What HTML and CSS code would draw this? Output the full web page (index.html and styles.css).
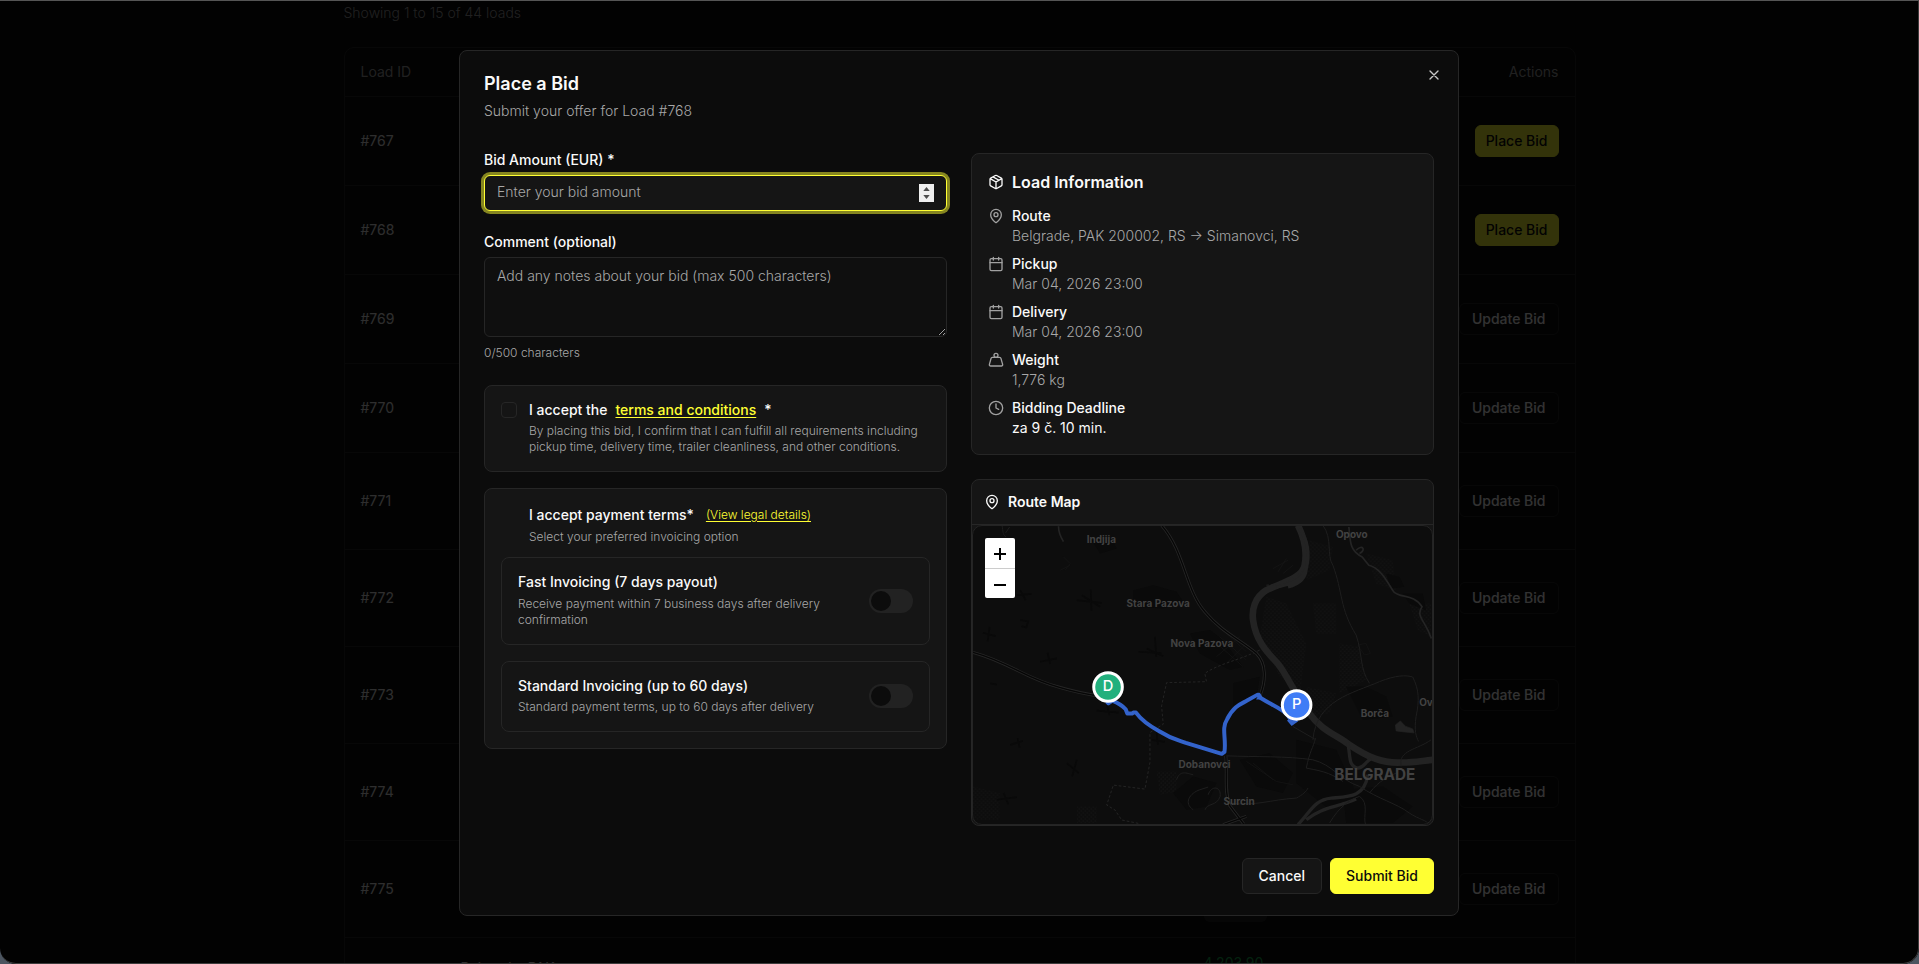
FILE: index.html
```html
<!DOCTYPE html>
<html lang="en">
<head>
<meta charset="utf-8">
<title>Place a Bid</title>
<link rel="stylesheet" href="styles.css">
</head>
<body>
<div class="window">
  <main class="page">
    <p class="summary">Showing 1 to 15 of 44 loads</p>
    <div class="table-card">
      <table class="loads">
        <colgroup><col class="col-id"><col><col class="col-price"></colgroup>
        <thead>
          <tr><th scope="col">Load ID</th><th></th><th></th><th scope="col" class="end">Actions</th></tr>
        </thead>
        <tbody>
          <tr class="short"><td>#767</td><td></td><td></td><td class="end"><button class="row-btn primary" type="button">Place Bid</button></td></tr>
          <tr class="short"><td>#768</td><td></td><td></td><td class="end"><button class="row-btn primary" type="button">Place Bid</button></td></tr>
          <tr class="short"><td>#769</td><td></td><td></td><td class="end"><button class="row-btn" type="button">Update Bid</button></td></tr>
          <tr class="short"><td>#770</td><td></td><td></td><td class="end"><button class="row-btn" type="button">Update Bid</button></td></tr>
          <tr class="tall"><td>#771</td><td></td><td></td><td class="end"><button class="row-btn" type="button">Update Bid</button></td></tr>
          <tr class="tall"><td>#772</td><td></td><td></td><td class="end"><button class="row-btn" type="button">Update Bid</button></td></tr>
          <tr class="tall"><td>#773</td><td></td><td></td><td class="end"><button class="row-btn" type="button">Update Bid</button></td></tr>
          <tr class="tall"><td>#774</td><td></td><td></td><td class="end"><button class="row-btn" type="button">Update Bid</button></td></tr>
          <tr class="tall"><td>#775</td><td></td><td><div class="price"><span class="chip"></span></div></td><td class="end"><button class="row-btn" type="button">Update Bid</button></td></tr>
          <tr class="tall"><td></td><td class="route">Belgrade, PAK</td><td><div class="price"><span class="amount">4,203.90</span></div></td><td></td></tr>
        </tbody>
      </table>
    </div>
  </main>

  <div class="overlay">
    <section class="dialog" role="dialog" aria-modal="true" aria-labelledby="dialog-title">
      <button class="close" type="button" aria-label="Close">
        <svg class="icon" viewBox="0 0 24 24"><path d="M18 6 6 18M6 6l12 12"/></svg>
      </button>
      <header class="dialog-head">
        <h2 id="dialog-title">Place a Bid</h2>
        <p>Submit your offer for Load #768</p>
      </header>

      <form class="dialog-form">
        <div class="columns">
          <div class="left">
            <div class="field">
              <label for="amount">Bid Amount (EUR) *</label>
              <div class="number">
                <input class="input focused" id="amount" type="number" placeholder="Enter your bid amount">
                <svg class="spinner" viewBox="0 0 15 18"><path d="M7.500 3l3.200 4H4.300zM7.500 15l3.200-4H4.300z"/></svg>
              </div>
            </div>
            <div class="field">
              <label for="comment">Comment (optional)</label>
              <textarea class="input area" id="comment" placeholder="Add any notes about your bid (max 500 characters)"></textarea>
              <p class="small">0/500 characters</p>
            </div>
            <div class="boxes">
              <div class="box terms">
                <input class="check" id="terms" type="checkbox">
                <div class="stack tight">
                  <div class="terms-label"><label for="terms">I accept the</label><a href="#terms">terms and conditions</a><span>*</span></div>
                  <p class="small">By placing this bid, I confirm that I can fulfill all requirements including pickup time, delivery time, trailer cleanliness, and other conditions.</p>
                </div>
              </div>
              <div class="box payment">
                <div class="payment-head">
                  <div class="payment-title"><span>I accept payment terms*</span><a class="small-link" href="#legal">(View legal details)</a></div>
                  <p class="small">Select your preferred invoicing option</p>
                </div>
                <div class="boxes">
                  <div class="box option">
                    <div class="stack">
                      <label for="fast">Fast Invoicing (7 days payout)</label>
                      <p class="small">Receive payment within 7 business days after delivery confirmation</p>
                    </div>
                    <input class="switch" id="fast" type="checkbox" role="switch">
                  </div>
                  <div class="box option">
                    <div class="stack tight">
                      <label for="standard">Standard Invoicing (up to 60 days)</label>
                      <p class="small">Standard payment terms, up to 60 days after delivery</p>
                    </div>
                    <input class="switch" id="standard" type="checkbox" role="switch">
                  </div>
                </div>
              </div>
            </div>
          </div>

          <div class="right">
            <section class="box info">
              <h3><svg class="icon" viewBox="0 0 24 24"><path d="M11 21.730a2 2 0 0 0 2 0l7-4A2 2 0 0 0 21 16V8a2 2 0 0 0-1-1.730l-7-4a2 2 0 0 0-2 0l-7 4A2 2 0 0 0 3 8v8a2 2 0 0 0 1 1.730zM12 22V12M3.300 7 12 12l8.700-5M7.500 4.270l9 5.150"/></svg>Load Information</h3>
              <dl>
                <div class="fact"><svg class="icon" viewBox="0 0 24 24"><path d="M20 10c0 5-5.500 10.200-7.400 11.800a1 1 0 0 1-1.200 0C9.500 20.200 4 15 4 10a8 8 0 0 1 16 0"/><circle cx="12" cy="10" r="3"/></svg><div><dt>Route</dt><dd>Belgrade, PAK 200002, RS → Simanovci, RS</dd></div></div>
                <div class="fact"><svg class="icon" viewBox="0 0 24 24"><path d="M8 2v4M16 2v4M3 10h18"/><rect x="3" y="4" width="18" height="18" rx="2"/></svg><div><dt>Pickup</dt><dd>Mar 04, 2026 23:00</dd></div></div>
                <div class="fact"><svg class="icon" viewBox="0 0 24 24"><path d="M8 2v4M16 2v4M3 10h18"/><rect x="3" y="4" width="18" height="18" rx="2"/></svg><div><dt>Delivery</dt><dd>Mar 04, 2026 23:00</dd></div></div>
                <div class="fact"><svg class="icon" viewBox="0 0 24 24"><circle cx="12" cy="5" r="3"/><path d="M6.500 8a2 2 0 0 0-1.900 1.460L2.100 18.500A2 2 0 0 0 4 21h16a2 2 0 0 0 1.930-2.540L19.400 9.500A2 2 0 0 0 17.480 8z"/></svg><div><dt>Weight</dt><dd>1,776 kg</dd></div></div>
                <div class="fact"><svg class="icon" viewBox="0 0 24 24"><circle cx="12" cy="12" r="10"/><path d="M12 6v6l4 2"/></svg><div><dt>Bidding Deadline</dt><dd class="bright">za 9 č. 10 min.</dd></div></div>
              </dl>
            </section>

            <section class="box map-card">
              <h3><svg class="icon" viewBox="0 0 24 24"><path d="M20 10c0 5-5.500 10.200-7.400 11.800a1 1 0 0 1-1.200 0C9.500 20.200 4 15 4 10a8 8 0 0 1 16 0"/><circle cx="12" cy="10" r="3"/></svg>Route Map</h3>
              <div class="map">
                <svg class="map-art" viewBox="38 165 1380 900" preserveAspectRatio="xMidYMid slice" role="img" aria-label="Route from Belgrade to Simanovci">
                  <defs>
                    <pattern id="dots" width="12" height="12" patternUnits="userSpaceOnUse"><rect x="2" y="2" width="3" height="3"/><rect x="8" y="8" width="3" height="3"/></pattern>
                  </defs>
                  <g class="dots" fill="url(#dots)">
                    <path d="M1050 210l70 20-10 70-70 30zM1220 250l80 20 10 90-60-20zM920 380l60 20 60 120-20 160-60-60-60-120zM1060 400h70v90h-60zM1140 520l60 10 20 100-80 40zM1350 400h65v100l-40-20zM590 905h60v60l-50 10zM38 950l80 20v80H38zM1040 650l90 20-20 60-60 10zM350 1010h60v50h-60z"/>
                  </g>
                  <g class="urban">
                    <path d="M395 210l60-5 15 30-50 15zM520 360l60-15 70 20 20 30-60 20-90-5zM690 490l60-10 40 30 60 80-40 10-90-50zM1280 310l40 10 15 30-40 5zM1330 370l60 0 10 50-50-20zM1160 650l60 0 60 30 20 60-90 10zM820 640l80-20-10 70-70 20zM840 870l90-20 70 60-30 60-80-20zM1010 810l120 30 60 130-80 50-100-80zM1150 960l120-10 90 60-60 50h-140zM640 970l60-50 70 20-30 70-60 10z"/>
                  </g>
                  <g class="streets">
                    <path d="M760 510l90 80M780 500l80 70M800 490l60 55M770 560l70-60M800 580l60-60M1195 525l20 30 18-5-14-30zM860 875l90 60 50 10M880 880l60 50M310 260l20 20-15 20M300 300l30-15"/>
                    <path d="M940 295l45-25M955 305l25-40M970 310l30-25"/>
                  </g>
                  <g class="villages">
                    <path d="M535 545l70 4M585 500l4 60M560 535l50 24M350 390l75 8M392 358l2 64M365 375l55 35M68 488l38 10M88 470l-6 44M240 575l50-10M262 548l8 34M150 825l38-12M172 805l6 28M110 990l60-8M130 970l14 34M320 880l36 30M350 870l-14 50M170 375l44-4M180 360l16 30M180 450l24 4-6 18-14-4M410 722l66 6M440 700l8 36M575 810l40 6M590 785l4 40M90 640l20 4"/>
                  </g>
                  <g class="river">
                    <path class="w22" d="M1015 165c20 40 28 80 20 120-6 36-60 50-115 75-36 22-44 60-40 90 8 60 40 95 72 128 30 35 50 90 95 150 40 55 80 65 120 95 60 40 100 58 160 55 40 0 60-5 95-8"/>
                    <path class="w10" d="M1020 175c28 40 30 80 20 120-14 34-40 46-90 56M985 350c40-10 55-30 55-60"/>
                    <path class="w10" d="M1165 820c8 35 0 70 30 75 20-2 20-18 40-28M1015 1065c40-42 50-75 100-80 50-4 100 0 110-70M1040 1050c50-40 90-35 150-62"/>
                    <path class="lake" d="M1308 765l15-12 15 16 22 8 4 12-30-3-24-3z"/>
                  </g>
                  <g class="minor">
                    <path d="M1090 165c30 40 10 90 30 120 30 80 20 130 70 210 20 60 10 100 40 145M1060 810c10-120 120-140 200-175 50-20 80-20 100-14 20 40 20 70 10 120-6 40 0 60 8 74M1325 890c-10-50 50-50 90-80M800 858c90 4 180 0 260 12 60 15 80 60 140 80 60 40 110 50 150 80 30 20 50 20 60 35M1040 895c10-50 20-60 28-90M1000 770l66 38M1040 895c60 10 80 20 110 40M650 930c10-30 30-20 50-15M700 1020c-30-20-10-50 20-60l25-8M745 975c10-30 40-25 36 5-10 30-40 20-45 40M810 1000c80 10 120-10 200-15 20-10 30-20 35-30M1110 1060c30-50 60-70 90-80 30 20 10 60 18 84M1230 970c30-40 60-50 80-60M125 165c5 20 0 25 12 35M148 170l-12 18"/>
                    <path class="w4" d="M1168 170c5 40 0 70 40 90l20 25c40 10 60 60 75 80 20 20 60 5 85 45-20 30 10 40 28 95M1190 240c20-20 30 0 10 10M295 168c0 20 5 30 15 46"/>
                  </g>
                  <g class="dashed"><path d="M900 540c-60 30-120 40-165 70l5 25-120 3-15 70 5 55-40 25 0 90-15 80-95-12-20 60 25 15 20 30 50 10"/><path d="M920 345l50-2 60-40"/></g>
                  <g class="roads">
                    <path d="M605 165c70 80 70 190 130 260 50 60 100 80 155 125 30 30 30 80 10 130M38 547c110 30 160 80 260 105 60 18 90 22 130 28M798 858c5 60-5 110 12 150l42 55M790 1065l70-25"/>
                    <path class="core" d="M605 165c70 80 70 190 130 260 50 60 100 80 155 125 30 30 30 80 10 130M38 547c110 30 160 80 260 105 60 18 90 22 130 28M798 858c5 60-5 110 12 150l42 55M790 1065l70-25"/>
                  </g>
                  <g class="towns">
                    <text x="424" y="217">Indjija</text><text x="1177" y="202">Opovo</text><text x="595" y="410">Stara Pazova</text><text x="726" y="532">Nova Pazova</text><text x="734" y="894">Dobanovci</text><text x="838" y="1006">Surcin</text><text x="1246" y="741">Borča</text><text x="1400" y="707">Ov</text>
                    <text class="city" x="1246" y="931">BELGRADE</text>
                  </g>
                  <path class="track" d="M440 695l5 5 12-8c20 8 30 15 40 26l5 13h14l4-3h8c20 28 50 45 70 56 40 25 50 25 80 35l108 33 8-6c6-40-10-70 8-98 20-40 40-45 60-56l32-18 3 0 6 10c40 25 60 30 80 50l11 18"/>
                  <path class="tips" d="M897 675l-8 14h18zM982 752l14 16 20-14-14-12zM437 698l8 8 7-8z"/>
                  <g class="pin drop"><circle cx="444" cy="651" r="43"/><text x="444" y="663">D</text></g>
                  <g class="pin pick"><circle cx="1011" cy="705" r="43"/><text x="1011" y="717">P</text></g>
                </svg>
                <div class="zoom">
                  <button type="button" aria-label="Zoom in"><svg viewBox="0 0 14 14"><path d="M1 7h12M7 1v12"/></svg></button>
                  <button type="button" aria-label="Zoom out"><svg viewBox="0 0 14 14"><path d="M1 7h12"/></svg></button>
                </div>
              </div>
            </section>
          </div>
        </div>

        <footer class="actions">
          <button class="btn" type="button">Cancel</button>
          <button class="btn submit" type="submit">Submit Bid</button>
        </footer>
      </form>
    </section>
  </div>
</div>
</body>
</html>
```

FILE: styles.css
```css
* { box-sizing: border-box; }
html, body { height: 100%; }
body {
  margin: 0;
  background: #4c5560;
  color: #fafafa;
  font: 14px/20px Inter, "Liberation Sans", sans-serif;
  overflow: hidden;
}
h2, h3, p, dl, dd { margin: 0; }
button, input, textarea { font: inherit; color: inherit; }
a { color: #ffff33; text-underline-offset: 2px; }

.window {
  position: relative;
  height: 100%;
  overflow: hidden;
  background: #0a0a0a;
  border-radius: 0 0 16px 16px;
}

/* Page behind the dialog */
.page {
  max-width: 1232px;
  margin: 0 auto;
  padding-top: 3px;
  color: #a1a1a1;
}
.summary { font-weight: 300; }
.table-card {
  margin-top: 24px;
  border: 1px solid #262626;
  border-radius: 10px;
}
.loads { width: 100%; border-collapse: collapse; table-layout: fixed; }
.col-id { width: 100px; }
.col-price { width: 240px; }
.loads col:nth-child(2) { width: 743px; }
.loads th, .loads td { padding: 0 16px; font-weight: 400; text-align: left; }
.loads th { height: 48px; }
.loads th.end, .loads td.end { text-align: right; }
.loads tr { border-bottom: 1px solid #262626; }
.loads td { color: #e4e4e4; }
.loads .short { height: 89px; }
.loads .tall { height: 97px; }
.loads td.route { vertical-align: top; padding-top: 20px; }
.price { display: flex; flex-direction: column; height: 66px; }
.amount { color: #16a34a; }
.chip { width: 63px; height: 22px; margin-top: auto; border-radius: 6px; background: #222222; }
.row-btn {
  height: 32px;
  padding: 0 12px;
  border: 1px solid #262626;
  border-radius: 6px;
  background: #0a0a0a;
  color: #fafafa;
  font-weight: 500;
}
.row-btn.primary { padding: 0 10px; background: #ffff33; border-color: #ffff33; color: #0a0a0a; }

/* Dialog */
.overlay {
  position: absolute;
  inset: 0;
  display: grid;
  place-items: center;
  padding-top: 1px;
  background: rgba(0, 0, 0, 0.8);
  border: solid #3c3c3c;
  border-width: 1px 1px 1px 0;
  border-top-color: #555555;
  border-radius: 0 0 16px 16px;
}
.dialog {
  position: relative;
  width: 100%;
  max-width: 1000px;
  padding: 24px 24px 21px;
  background: #0c0c0c;
  border: 1px solid #262626;
  border-radius: 8px;
}
.close {
  position: absolute;
  top: 16px;
  right: 16px;
  display: flex;
  padding: 0;
  border: 0;
  background: none;
  color: #c8c8c8;
}
.icon {
  flex: none;
  width: 16px;
  height: 16px;
  fill: none;
  stroke: currentColor;
  stroke-width: 2;
  stroke-linecap: round;
  stroke-linejoin: round;
}
.dialog-head { display: grid; gap: 8px; margin-bottom: 32px; }
.dialog-head h2 { font-size: 18px; line-height: 18px; font-weight: 600; }
.dialog-head p { color: #a8a8a8; font-weight: 300; }
.columns { display: grid; grid-template-columns: 1fr 1fr; gap: 24px; align-items: start; }
.left, .right { display: grid; gap: 24px; }
.field { display: grid; gap: 8px; }
.field label { line-height: 14px; font-weight: 500; }
.small { font-size: 12px; line-height: 16px; font-weight: 300; color: #a8a8a8; }
.input {
  display: block;
  width: 100%;
  height: 36px;
  padding: 3px 12px 5px;
  border: 1px solid #262626;
  border-radius: 6px;
  background: #151515;
  outline: none;
}
.input::placeholder { color: #a8a8a8; opacity: 1; font-weight: 300; }
.focused { border-color: #ffff33; box-shadow: 0 0 0 3px rgba(255, 255, 51, 0.5); appearance: textfield; }
.focused::-webkit-inner-spin-button { appearance: none; }
.area { height: 80px; padding: 8px 12px; background: #0f0f0f; resize: vertical; }
.number { position: relative; }
.spinner { position: absolute; top: 9px; right: 13px; width: 15px; height: 18px; background: #efefef; fill: #4c4c4c; }

.boxes { display: grid; gap: 16px; }
.box { border: 1px solid #262626; border-radius: 8px; background: #151515; padding: 16px; }
.terms { display: flex; gap: 12px; }
.check, .switch { appearance: none; flex: none; margin: 0; }
.check { width: 16px; height: 16px; border: 1px solid #262626; border-radius: 4px; background: #151515; }
.stack { display: grid; gap: 6px; }
.stack.tight { gap: 5px; }
.stack label, .terms-label { line-height: 16px; font-weight: 500; }
.terms-label { display: flex; gap: 8px; }
.payment { display: grid; gap: 12px; }
.payment-head { display: grid; gap: 4px; padding-left: 28px; }
.payment-title { display: flex; gap: 12px; font-weight: 500; }
.small-link { font-size: 12px; font-weight: 300; }
.option { display: flex; align-items: center; justify-content: space-between; gap: 40px; }
.switch { width: 44px; height: 24px; padding: 2px; border-radius: 12px; background: #222222; }
.switch::before { content: ""; display: block; width: 20px; height: 20px; border-radius: 50%; background: #0c0c0c; }

.info { display: grid; gap: 12px; }
.info h3, .map-card h3 { display: flex; align-items: center; gap: 8px; font-weight: 600; }
.info h3 { font-size: 16px; line-height: 24px; }
.info dl { display: grid; gap: 8px; }
.fact { display: flex; gap: 8px; }
.fact .icon { margin-top: 2px; color: #a1a1a1; }
.fact dt { font-weight: 500; }
.fact dd { color: #a8a8a8; font-weight: 300; }
.fact dd.bright { color: #fafafa; font-weight: 400; }

.map-card { padding: 0; overflow: hidden; }
.map-card h3 { padding: 12px; font-size: 14px; border-bottom: 1px solid #262626; }
.map { position: relative; height: 300px; border: 1px solid #242424; border-radius: 10px; overflow: hidden; background: #0d0d0d; }
.map-art { display: block; width: 100%; height: 100%; }
.dots { opacity: 0.06; }
.dots path { stroke: none; }
.map-art pattern rect { fill: #ffffff; }
.urban { fill: #0a0a0a; }
.streets, .villages, .minor, .river, .dashed, .roads { fill: none; stroke: #1c1c1c; stroke-width: 2; }
.streets { stroke: #161616; }
.villages { stroke: #090909; stroke-width: 5; }
.minor { stroke: #1e1e1e; stroke-width: 3; }
.minor .w4 { stroke: #242424; stroke-width: 5; }
.river { stroke: #232323; }
.river .w22 { stroke-width: 20; }
.river .w10 { stroke-width: 10; }
.river .lake { fill: #232323; }
.dashed { stroke: #242424; stroke-width: 3; stroke-dasharray: 8 6; }
.roads { stroke: #262626; stroke-width: 9; }
.roads .core { stroke: #060606; stroke-width: 4; }
.towns { fill: #424242; font: 700 30px Inter, sans-serif; text-anchor: middle; }
.towns .city { font-size: 46px; }
.track { fill: none; stroke: #3363cb; stroke-width: 12; stroke-linejoin: round; }
.tips { fill: #3363cb; }
.pin circle { stroke: #ffffff; stroke-width: 9; }
.pin text { fill: #ffffff; font: 500 44px Inter, sans-serif; text-anchor: middle; }
.drop circle { fill: #22b07d; }
.pick circle { fill: #3f7cf6; }
.zoom { position: absolute; top: 12px; left: 12px; width: 30px; border-radius: 2px; overflow: hidden; }
.zoom button { display: grid; place-items: center; width: 30px; height: 30px; padding: 3px 0 0; border: 0; background: #ffffff; }
.zoom button + button { border-top: 1px solid #cccccc; }
.zoom svg { width: 14px; height: 14px; fill: none; stroke: #000000; stroke-width: 2; }

.actions { display: flex; justify-content: flex-end; gap: 8px; margin-top: 32px; }
.btn {
  height: 36px;
  padding: 0 16px;
  border: 1px solid #262626;
  border-radius: 6px;
  background: #151515;
  font-weight: 500;
}
.btn.submit { padding: 0 15px; border-color: #ffff33; background: #ffff33; color: #0c0c0c; }
```
